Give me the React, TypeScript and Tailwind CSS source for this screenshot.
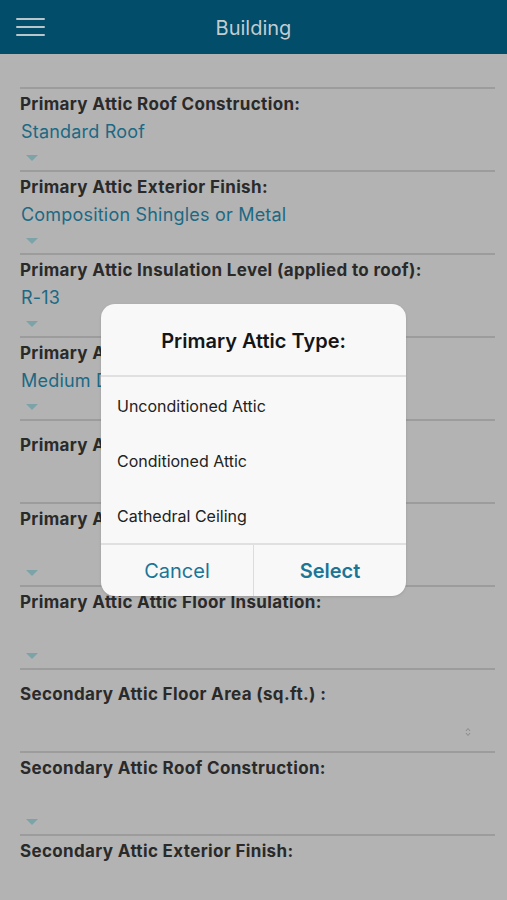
import React from "react";

type Field = {
  label: string;
  kind: "select" | "number";
  value?: string;
  spinner?: boolean;
};

const fields: Field[] = [
  { label: "Primary Attic Roof Construction:", kind: "select", value: "Standard Roof" },
  { label: "Primary Attic Exterior Finish:", kind: "select", value: "Composition Shingles or Metal" },
  { label: "Primary Attic Insulation Level (applied to roof):", kind: "select", value: "R-13" },
  { label: "Primary Attic Roof Color:", kind: "select", value: "Medium Dark" },
  { label: "Primary Attic Floor Area (sq.ft.) :", kind: "number" },
  { label: "Primary Attic Type:", kind: "select" },
  { label: "Primary Attic Attic Floor Insulation:", kind: "select" },
  { label: "Secondary Attic Floor Area (sq.ft.) :", kind: "number", spinner: true },
  { label: "Secondary Attic Roof Construction:", kind: "select" },
  { label: "Secondary Attic Exterior Finish:", kind: "select" },
];

const options = ["Unconditioned Attic", "Conditioned Attic", "Cathedral Ceiling"];

function Caret() {
  return (
    <svg width="12" height="6" viewBox="0 0 12 6" className="ml-[6px]">
      <path d="M0 0 L12 0 L6 6 Z" fill="#7ba3a8" />
    </svg>
  );
}

function FieldRow({ field }: { field: Field }) {
  if (field.kind === "number") {
    return (
      <div className="h-[83px] border-t-2 border-[#9c9c9c] flex flex-col">
        <div className="mt-[14px] h-[20px] text-[17px] leading-[20px] tracking-[0.35px] font-bold text-[#2a2a2a] whitespace-nowrap">
          {field.label}
        </div>
        <div className="flex-1 flex items-center justify-end pr-[24px]">
          {field.spinner && (
            <svg width="6" height="10" viewBox="0 0 6 10" className="mt-[8px]">
              <path d="M1 4 L3 1.5 L5 4" stroke="#8a8a8a" strokeWidth="1" fill="none" />
              <path d="M1 6 L3 8.5 L5 6" stroke="#8a8a8a" strokeWidth="1" fill="none" />
            </svg>
          )}
        </div>
      </div>
    );
  }
  return (
    <div className="h-[83px] border-t-2 border-[#9c9c9c] flex flex-col">
      <div className="mt-[5px] h-[20px] text-[17px] leading-[20px] tracking-[0.35px] font-bold text-[#2a2a2a] whitespace-nowrap">
        {field.label}
      </div>
      <div className="mt-[6px] h-[24px] pl-[1px] text-[18px] leading-[24px] tracking-[0.2px] text-[#1c6984]">
        {field.value ?? ""}
      </div>
      <div className="mt-[11px]">
        <Caret />
      </div>
    </div>
  );
}

export default function App() {
  return (
    <div className="relative w-full h-[900px] overflow-hidden bg-[#b3b3b3] font-['Inter',sans-serif]">
      {/* Top bar */}
      <header className="h-[54px] bg-[#024d6a] flex items-center px-[16px]">
        <div className="w-[29px] flex flex-col gap-[6px]">
          <span className="h-[2px] bg-[#b9c6cc] rounded-full" />
          <span className="h-[2px] bg-[#b9c6cc] rounded-full" />
          <span className="h-[2px] bg-[#b9c6cc] rounded-full" />
        </div>
        <h1 className="flex-1 text-center pr-[29px] pt-[2px] text-[20px] text-[#c2ccd1]">
          Building
        </h1>
      </header>

      {/* Form */}
      <div className="pt-[33px] pl-[20px] pr-[12px]">
        {fields.map((f) => (
          <FieldRow key={f.label} field={f} />
        ))}
      </div>

      {/* Picker dialog */}
      <div className="absolute left-[101px] top-[304px] w-[305px] h-[292px] rounded-[14px] bg-[#f8f8f8] flex flex-col overflow-hidden shadow-sm">
        <div className="h-[73px] flex items-center justify-center pt-[3px] border-b-2 border-[#e0e0e0]">
          <span className="text-[20px] font-semibold text-[#151515]">Primary Attic Type:</span>
        </div>
        <div className="flex flex-col pt-[1px]">
          {options.map((o) => (
            <div key={o} className="h-[55px] flex items-center px-[16px] text-[16px] text-[#222]">
              {o}
            </div>
          ))}
        </div>
        <div className="flex-1 flex border-t-2 border-[#e0e0e0]">
          <button className="flex-1 text-[20px] text-[#1b7597] border-r border-[#dcdcdc]">Cancel</button>
          <button className="flex-1 text-[20px] font-semibold text-[#1b7597]">Select</button>
        </div>
      </div>
    </div>
  );
}
